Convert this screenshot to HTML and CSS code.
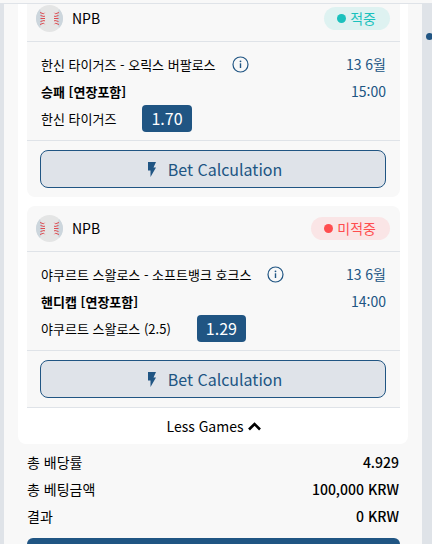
FILE: index.html
```html
<!DOCTYPE html>
<html lang="ko">
<head>
  <meta charset="UTF-8">
  <meta name="viewport" content="width=device-width, initial-scale=1">
  <title>NPB</title>
  <link rel="stylesheet" href="styles.css">
</head>
<body>

  <svg class="sprite" aria-hidden="true">
    <symbol id="icon-ball" viewBox="0 0 27 27">
      <circle cx="13.5" cy="13.5" r="13.5" fill="#e4e5e5"/>
      <path d="M4 4 Q9 13.5 4 23 Q0 19 0 13.5 Q0 8 4 4Z M23 4 Q18 13.5 23 23 Q27 19 27 13.5 Q27 8 23 4Z" fill="#ccd6dd"/>
      <path d="M4 7.500l3.500 1.300 1-1M4.500 10.500l3.500 1 1-.5M4.500 13.500h4.500M4.500 16.500l3.500-1 1 .5M4 19.500l3.500-1.300 1 1M23 7.500l-3.500 1.300-1-1M22.500 10.500l-3.500 1-1-.5M22.500 13.500h-4.500M22.500 16.500l-3.500-1-1 .5M23 19.500l-3.500-1.300-1 1" fill="none" stroke="#dd4b50" stroke-width="1"/>
    </symbol>
    <symbol id="icon-info" viewBox="0 0 17 17">
      <circle cx="8.500" cy="8.500" r="7.500" fill="none" stroke="currentColor" stroke-width="1.200"/>
      <path d="M8.500 7.300v4.700" stroke="currentColor" stroke-width="1.400"/>
      <circle cx="8.500" cy="5.300" r="0.900" fill="currentColor"/>
    </symbol>
    <symbol id="icon-bolt" viewBox="0 0 8 15">
      <path d="M0 0H8L5.500 5.500H8L2.500 15V8.500H0Z" fill="currentColor"/>
    </symbol>
  </svg>

  <header class="topbar"></header>

  <main class="slip">
    <section class="games">
      <article class="game">
        <div class="game-head">
          <svg class="ball" aria-hidden="true"><use href="#icon-ball"/></svg>
          <span>NPB</span>
          <span class="status win">적중</span>
        </div>
        <div class="game-body">
          <div class="line">
            <span>한신 타이거즈 - 오릭스 버팔로스</span>
            <button type="button" class="info-btn" aria-label="Info"><svg><use href="#icon-info"/></svg></button>
            <span class="when">13 6월</span>
          </div>
          <div class="line">
            <b>승패 [연장포함]</b>
            <span class="when">15:00</span>
          </div>
          <div class="line">
            <span>한신 타이거즈</span>
            <span class="odds">1.70</span>
          </div>
        </div>
        <div class="game-foot">
          <button type="button" class="calc-btn"><svg aria-hidden="true"><use href="#icon-bolt"/></svg>Bet Calculation</button>
        </div>
      </article>

      <article class="game">
        <div class="game-head">
          <svg class="ball" aria-hidden="true"><use href="#icon-ball"/></svg>
          <span>NPB</span>
          <span class="status lose">미적중</span>
        </div>
        <div class="game-body">
          <div class="line">
            <span>야쿠르트 스왈로스 - 소프트뱅크 호크스</span>
            <button type="button" class="info-btn" aria-label="Info"><svg><use href="#icon-info"/></svg></button>
            <span class="when">13 6월</span>
          </div>
          <div class="line">
            <b>핸디캡 [연장포함]</b>
            <span class="when">14:00</span>
          </div>
          <div class="line">
            <span>야쿠르트 스왈로스 (2.5)</span>
            <span class="odds">1.29</span>
          </div>
        </div>
        <div class="game-foot">
          <button type="button" class="calc-btn"><svg aria-hidden="true"><use href="#icon-bolt"/></svg>Bet Calculation</button>
        </div>
      </article>

      <button type="button" class="less-btn">Less Games
        <svg viewBox="0 0 13 9" aria-hidden="true"><path d="M1 7.500L6.500 2L12 7.500" fill="none" stroke="currentColor" stroke-width="2.600"/></svg>
      </button>
    </section>

    <dl class="summary">
      <div><dt>총 배당률</dt><dd>4.929</dd></div>
      <div><dt>총 베팅금액</dt><dd>100,000 KRW</dd></div>
      <div><dt>결과</dt><dd>0 KRW</dd></div>
    </dl>
    <div class="slip-foot"></div>
  </main>

  <span class="marker"></span>

</body>
</html>
```
FILE: styles.css
```css
* {
  box-sizing: border-box;
}

body {
  position: relative;
  margin: 0;
  overflow-x: hidden;
  background-color: #dfe3e8;
  color: #000;
  font-family: "Noto Sans CJK KR", sans-serif;
  font-size: 14px;
  line-height: 27px;
}

button {
  font-family: inherit;
  cursor: pointer;
}

.sprite {
  display: none;
}

.topbar {
  position: relative;
  z-index: 1;
  height: 4px;
  background-color: #f8f8f8;
  border-bottom: 1px solid #dfe3e8;
}

.slip {
  margin: -8px 10px 0 4px;
  padding: 0 14px;
  background-color: #f8f8f8;
}

.games {
  padding: 0 8px 0 9px;
  background-color: #fff;
  border-radius: 0 0 8px 8px;
}

.game {
  background-color: #f8f8f8;
  border-radius: 8px;
}

.game + .game {
  margin-top: 9px;
  border-radius: 8px 8px 0 0;
}

.game-head {
  display: flex;
  align-items: center;
  gap: 9px;
  height: 46px;
  padding: 0 10px 0 9px;
  border-bottom: 1px solid #dfe3e8;
}

.ball {
  width: 27px;
  height: 27px;
}

.status {
  display: flex;
  align-items: center;
  gap: 4px;
  height: 23px;
  margin-left: auto;
  padding: 0 14px 0 13px;
  border-radius: 12px;
}

.status::before {
  content: "";
  width: 9px;
  height: 9px;
  border-radius: 50%;
  background-color: currentColor;
}

.win {
  background-color: #def2f1;
  color: #1bc1bd;
}

.lose {
  background-color: #fae5e6;
  color: #ff4d4f;
}

.game-body {
  padding: 9px 14px 8px;
  font-size: 13px;
}

.line {
  display: flex;
  align-items: center;
  height: 27px;
}

.info-btn {
  display: flex;
  margin-left: 16px;
  padding: 0;
  background: none;
  border: none;
  color: #205583;
}

.info-btn svg {
  width: 17px;
  height: 17px;
}

.when {
  margin-left: auto;
  color: #205583;
  font-size: 14px;
}

.odds {
  margin-left: 26px;
  padding: 0 9px;
  border-radius: 4px;
  background-color: #205583;
  color: #fff;
  font-size: 16px;
}

.game-foot {
  padding: 9px 14px 9px 13px;
  border-top: 1px solid #dfe3e8;
}

.calc-btn {
  display: flex;
  align-items: center;
  justify-content: center;
  gap: 12px;
  width: 100%;
  height: 38px;
  padding: 0 0 0 4px;
  border: 1px solid #205583;
  border-radius: 8px;
  background-color: #dfe3e9;
  color: #205583;
  font-size: 16px;
}

.calc-btn svg {
  width: 8px;
  height: 15px;
}

.less-btn {
  display: flex;
  align-items: center;
  justify-content: center;
  gap: 4px;
  width: 100%;
  height: 37px;
  padding: 0;
  background: none;
  border: none;
  border-top: 1px solid #dfe3e8;
  color: #000;
  font-size: 14px;
}

.less-btn svg {
  width: 13px;
  height: 9px;
}

.summary {
  margin: 0;
  padding: 5px 9px 8px;
}

.summary div {
  display: flex;
  justify-content: space-between;
}

.summary dd {
  margin: 0;
  font-weight: 500;
}

.slip-foot {
  height: 6px;
  margin: 0 8px 0 9px;
  border-radius: 8px 8px 0 0;
  background-color: #205583;
}

.marker {
  position: absolute;
  top: 33px;
  right: -1px;
  width: 7px;
  height: 7px;
  border-radius: 50%;
  background-color: #205583;
}
```
